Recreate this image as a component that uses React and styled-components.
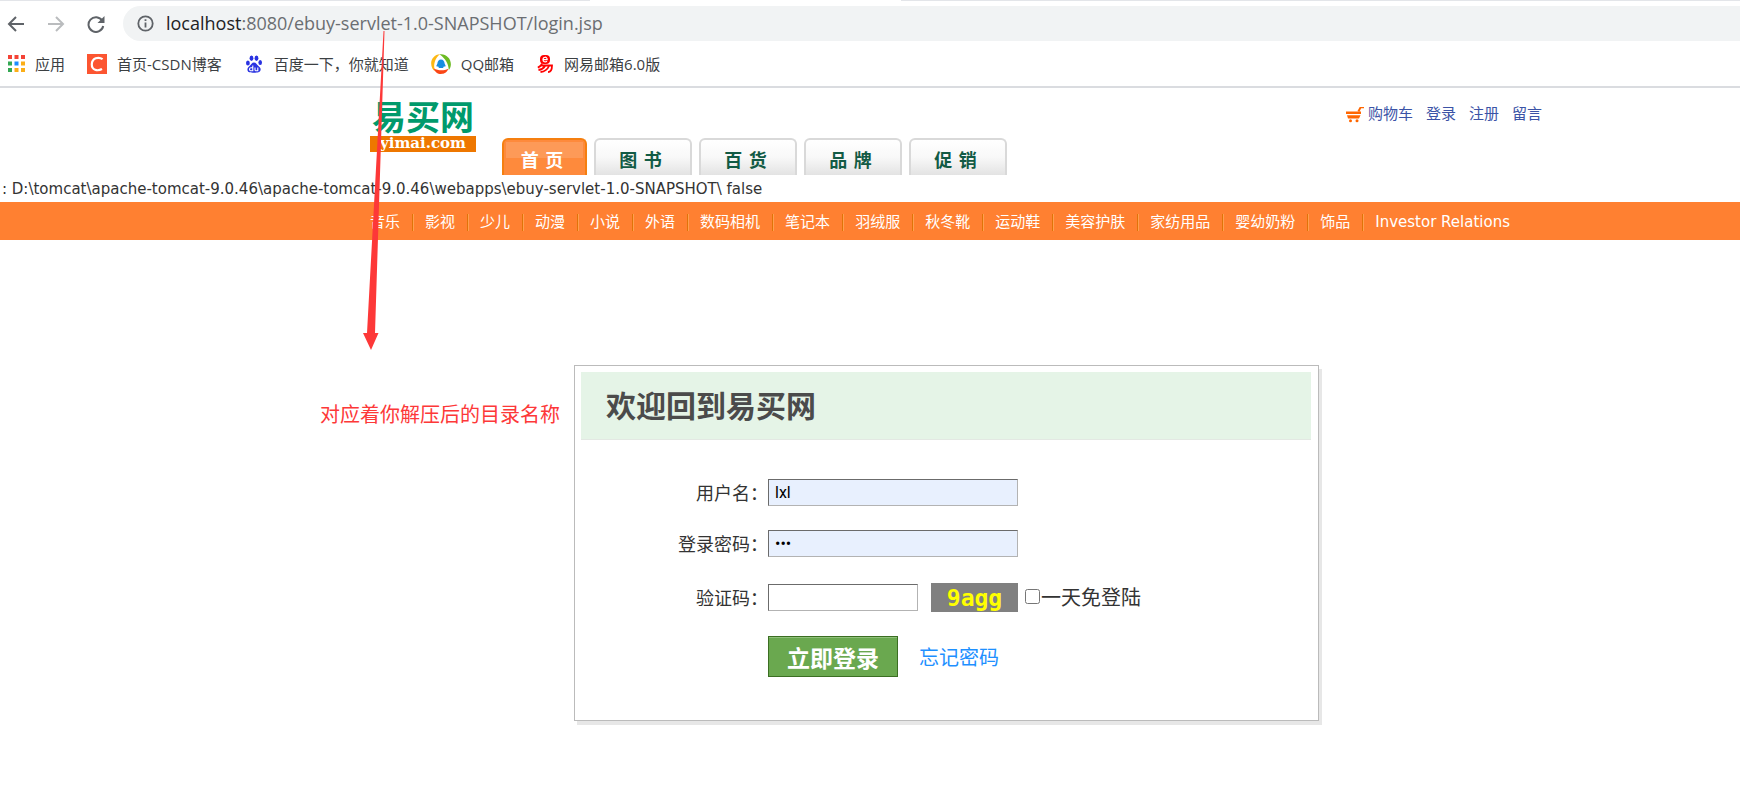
import React, { useState } from "react"
import styled, { createGlobalStyle } from "styled-components"

const TABS = ["首 页", "图 书", "百 货", "品 牌", "促 销"]

const CATEGORIES = [
    "音乐", "影视", "少儿", "动漫", "小说", "外语", "数码相机", "笔记本",
    "羽绒服", "秋冬靴", "运动鞋", "美容护肤", "家纺用品", "婴幼奶粉", "饰品",
    "Investor Relations",
]

const DOTS = [
    ["#f44336", "#f44336", "#f44336"],
    ["#34a853", "#1a8cff", "#fbae17"],
    ["#34a853", "#fbae17", "#fbae17"],
]

function BackIcon({ color }) {
    return (
        <svg width="18" height="18" viewBox="0 0 18 18" fill="none" stroke={color} strokeWidth="2">
            <path d="M17 9H2M9 2L2 9l7 7" />
        </svg>
    )
}

function ForwardIcon({ color }) {
    return (
        <svg width="18" height="18" viewBox="0 0 18 18" fill="none" stroke={color} strokeWidth="2">
            <path d="M1 9h15M9 2l7 7-7 7" />
        </svg>
    )
}

function ReloadIcon() {
    return (
        <svg width="18" height="18" viewBox="0 0 18 18" fill="none">
            <path d="M15.2 5.6A7.4 7.4 0 1 0 16.2 11" stroke="#5f6368" strokeWidth="2" />
            <path d="M17.5 1v7h-7z" fill="#5f6368" />
        </svg>
    )
}

function InfoIcon() {
    return (
        <svg width="17" height="17" viewBox="0 0 17 17">
            <circle cx="8.5" cy="8.5" r="7.2" fill="none" stroke="#5f6368" strokeWidth="1.8" />
            <path d="M7.6 7.6h1.8v5H7.6zM7.6 4.3h1.8v1.8H7.6z" fill="#5f6368" />
        </svg>
    )
}

function AppsIcon() {
    return (
        <svg width="17" height="17" viewBox="0 0 17 17">
            {DOTS.map((row, y) => row.map((fill, x) => (
                <rect key={`${x}${y}`} x={x * 6.5} y={y * 6.5} width="4" height="4" fill={fill} />
            )))}
        </svg>
    )
}

function CsdnIcon() {
    return (
        <svg width="20" height="20" viewBox="0 0 20 20">
            <rect width="20" height="20" fill="#fc5531" />
            <path d="M15.6 5.2C11.5 2.4 5 4 4.8 10.4c-.1 5.8 5.7 7.1 10.2 4.6" fill="none" stroke="#fff" strokeWidth="2.2" />
        </svg>
    )
}

function BaiduIcon() {
    return (
        <svg width="20" height="18" viewBox="-1 0 20 18" fill="#2932e1">
            <ellipse cx="2.9" cy="8" rx="1.9" ry="2.5" />
            <ellipse cx="6.5" cy="3.3" rx="1.9" ry="2.7" />
            <ellipse cx="11.5" cy="3.3" rx="1.9" ry="2.7" />
            <ellipse cx="15.2" cy="7.5" rx="1.8" ry="2.5" />
            <path d="M9 7.500c2.200 0 2.700 2 4.200 3.300 1.800 1.500 2.800 2.500 2.300 4.500-.6 2.300-3 2.400-6.500 2.400s-6.100 0-6.500-2.400c-.4-2 .6-3 2.300-4.500C6.300 9.500 6.800 7.500 9 7.500z" />
            <path d="M7.800 10.500v5.300H6a1.500 1.500 0 0 1 0-3h1.800M10 12.500v2.200c0 .8.300 1.100 1 1.100h1.800v-3.300" fill="none" stroke="#fff" strokeWidth="1.1" />
        </svg>
    )
}

function QqMailIcon() {
    return (
        <svg width="20" height="20" viewBox="0 0 20 20">
            <path d="M9 .3C2 .5-2 8 1.400 14.500c.6 1.200 1.500 2 2.300 2.600C2.500 12 3 5 9 .3z" fill="#fdb813" />
            <path d="M8.500.3C15-.8 21 5 19.700 12c-.3 1.700-1 3-1.900 4C17.500 10.500 15 5 8.500.3z" fill="#6cbb23" />
            <path d="M2.700 14.200c4.300 2.600 9.800 2.800 14.600.6-1 3.500-4.300 5.200-7.300 5.200-3.400 0-6.500-2.300-7.300-5.800z" fill="#fa4616" />
            <path d="M10 5.500c2.200 0 3.500 1.700 3.600 4l1.100 2.400-.8.900-.9-.5-1 1.700H8l-1-1.700-.9.500-.8-.9 1.100-2.400c.1-2.300 1.400-4 3.600-4z" fill="#168de0" />
        </svg>
    )
}

function NeteaseIcon() {
    return (
        <svg width="18" height="18" viewBox="-1 0 18 18" fill="none" stroke="#f00">
            <rect x="3" y="0" width="10" height="9" rx="4" fill="#f00" stroke="none" />
            <path d="M5.800 4.700h4.400c0-3.400-4.200-3.200-4.200 0 0 2.300 2.500 2.600 4 1.500" stroke="#fff" strokeWidth="1.2" />
            <path d="M5 8.500C4 11 2.500 12 .8 12.600M4 10.500h11c0 4-.8 6.600-4 6.600M8 11c-1.500 2.500-3.500 3.600-6.500 4M12 11c-1.500 3.500-4.200 5.600-8.500 6" strokeWidth="1.8" />
        </svg>
    )
}

function CartIcon() {
    return (
        <svg width="18" height="17" viewBox="0 0 18 17" fill="#ff6600">
            <path d="M0 5.500h15v2.500H0zM1 9.200h13.500L13 12.500H2zM11.500 5l2.200-4H18v1.200h-2.800L13.500 5.500z" />
            <circle cx="4.500" cy="14.800" r="1.500" />
            <circle cx="11" cy="14.800" r="1.500" />
        </svg>
    )
}

export default function App() {
    const [user, setUser] = useState("lxl")
    const [password, setPassword] = useState("123")
    const [code, setCode] = useState("")

    return (
        <Page>
            <GlobalStyle />
            <Browser>
                <TabStrip />
                <Toolbar>
                    <NavButtons>
                        <IconButton aria-label="后退"><BackIcon color="#5f6368" /></IconButton>
                        <IconButton aria-label="前进"><ForwardIcon color="#babcbe" /></IconButton>
                        <IconButton aria-label="刷新"><ReloadIcon /></IconButton>
                    </NavButtons>
                    <AddressBar>
                        <InfoIcon />
                        <Url><b>localhost</b>:8080/ebuy-servlet-1.0-SNAPSHOT/login.jsp</Url>
                    </AddressBar>
                </Toolbar>
                <Bookmarks>
                    <Bookmark href="#"><AppsIcon />应用</Bookmark>
                    <Bookmark href="#"><CsdnIcon />首页-CSDN博客</Bookmark>
                    <Bookmark href="#"><BaiduIcon />百度一下，你就知道</Bookmark>
                    <Bookmark href="#"><QqMailIcon />QQ邮箱</Bookmark>
                    <Bookmark href="#"><NeteaseIcon />网易邮箱6.0版</Bookmark>
                </Bookmarks>
            </Browser>

            <Header>
                <Logo>
                    <LogoName>易买网</LogoName>
                    <LogoDomain>yimai.com</LogoDomain>
                </Logo>
                <Tabs>
                    {TABS.map((t, i) => <Tab key={t} href="#" $active={i === 0}>{t}</Tab>)}
                </Tabs>
                <UserLinks>
                    <a href="#"><CartIcon />购物车</a>
                    <a href="#">登录</a>
                    <a href="#">注册</a>
                    <a href="#">留言</a>
                </UserLinks>
            </Header>

            <DebugPath>: D:\tomcat\apache-tomcat-9.0.46\apache-tomcat-9.0.46\webapps\ebuy-servlet-1.0-SNAPSHOT\ false</DebugPath>

            <CategoryBar>
                {CATEGORIES.map((c) => <Category key={c} href="#">{c}</Category>)}
            </CategoryBar>

            <Main>
                <Note>对应着你解压后的目录名称</Note>
                <LoginBox>
                    <Title>欢迎回到易买网</Title>
                    <Form onSubmit={(e) => e.preventDefault()}>
                        <Label htmlFor="user">用户名：</Label>
                        <Field>
                            <Input id="user" $filled value={user} onChange={(e) => setUser(e.target.value)} />
                        </Field>
                        <Label htmlFor="password">登录密码：</Label>
                        <Field>
                            <Input id="password" type="password" $filled value={password} onChange={(e) => setPassword(e.target.value)} />
                        </Field>
                        <Label htmlFor="code">验证码：</Label>
                        <Field>
                            <Input id="code" $short value={code} onChange={(e) => setCode(e.target.value)} />
                            <Captcha>9agg</Captcha>
                            <Remember><input type="checkbox" />一天免登陆</Remember>
                        </Field>
                        <Actions>
                            <Submit type="submit">立即登录</Submit>
                            <Forgot href="#">忘记密码</Forgot>
                        </Actions>
                    </Form>
                </LoginBox>
            </Main>

            <Arrow viewBox="0 0 22 320">
                <path d="M20.500 0L21.500 0L12 302H15.500L8 319L0 302H4z" fill="#fd3838" />
            </Arrow>
        </Page>
    )
}

const GlobalStyle = createGlobalStyle`
* {
    box-sizing: border-box;
}
body {
    margin: 0;
    background: #fff;
    color: #333;
    font-family: "DejaVu Sans", "Noto Sans CJK SC", sans-serif;
    font-size: 15px;
}
a {
    text-decoration: none;
}
svg {
    flex-shrink: 0;
}
`

const Page = styled.div`
position: relative;
overflow: hidden;
`

const Browser = styled.header`
border-bottom: 2px solid #dadce0;
font-family: "Open Sans", "Noto Sans CJK SC", sans-serif;
`

/* the open tab interrupts the line above the toolbar */
const TabStrip = styled.div`
height: 1px;
margin-bottom: 5px;
background: linear-gradient(to right, #e3e5e9 590px, #fff 590px, #fff 901px, #e3e5e9 901px);
`

const Toolbar = styled.div`
display: flex;
align-items: center;
`

const NavButtons = styled.div`
display: flex;
gap: 22px;
width: 123px;
padding-left: 7px;
`

const IconButton = styled.button`
display: flex;
padding: 0;
border: 0;
background: none;
`

const AddressBar = styled.div`
display: flex;
flex: 1;
align-items: center;
gap: 12px;
height: 35px;
padding-left: 14px;
border-radius: 18px 0 0 18px;
background: #f1f3f4;
`

const Url = styled.span`
padding-bottom: 2px;
color: #6b6e72;
font-size: 18px;
b {
    color: #202124;
    font-weight: 400;
}
`

const Bookmarks = styled.nav`
display: flex;
align-items: center;
gap: 22px;
height: 45px;
padding-left: 8px;
`

const Bookmark = styled.a`
display: flex;
align-items: center;
gap: 10px;
color: #3c4043;
font-size: 15px;
`

const Header = styled.div`
display: flex;
align-items: flex-start;
height: 87px;
padding: 12px 198px 0 370px;
`

const Logo = styled.div`
width: 106px;
margin-right: 26px;
`

const LogoName = styled.div`
height: 36px;
color: #009a6c;
font-family: "Noto Sans CJK SC", sans-serif;
font-size: 34px;
font-weight: 700;
line-height: 32px;
text-align: center;
`

const LogoDomain = styled.div`
height: 16px;
background: #ee7700;
color: #fff;
font-family: "DejaVu Serif", serif;
font-size: 15px;
font-weight: 700;
line-height: 15px;
text-align: center;
`

const Tabs = styled.nav`
display: flex;
flex: 1;
align-self: flex-end;
gap: 7px;
`

const Tab = styled.a`
display: flex;
align-items: center;
justify-content: center;
width: ${props => props.$active ? "85px" : "98px"};
height: 37px;
padding: 2px 5px 0 0;
border: 2px solid ${props => props.$active ? "#f57f10" : "#d9d9d9"};
border-bottom: 0;
border-radius: 6px 6px 0 0;
background: ${props => props.$active
        ? "linear-gradient(#fd9a58, #fd9a58) no-repeat center 2px / calc(100% - 4px) 16px, #fe8a3c"
        : "linear-gradient(#fff, #f8f8f8 50%, #e3e3e3)"};
color: ${props => props.$active ? "#fff" : "#125b45"};
font-size: 18px;
font-weight: 700;
`

const UserLinks = styled.nav`
display: flex;
gap: 13px;
padding-top: 4px;
a {
    display: flex;
    align-items: center;
    gap: 4px;
    color: #3b53a6;
    line-height: 20px;
}
`

const DebugPath = styled.div`
height: 27px;
padding-left: 2px;
line-height: 28px;
white-space: nowrap;
`

const CategoryBar = styled.nav`
display: flex;
align-items: center;
height: 38px;
padding: 2px 0 0 358px;
background: #ff8031;
`

const Category = styled.a`
padding: 0 12px;
border-right: 1px solid #e07309;
box-shadow: 1px 0 #ffa04e;
color: #fff;
line-height: 17px;
white-space: nowrap;
&:last-child {
    border-right: 0;
    box-shadow: none;
}
`

const Main = styled.main`
display: flex;
align-items: flex-start;
gap: 14px;
padding: 125px 421px 82px 320px;
`

const Note = styled.p`
flex-shrink: 0;
margin: 35px 0 0;
color: #fd3838;
font-size: 20px;
line-height: 30px;
`

const LoginBox = styled.section`
flex: 1;
padding: 6px 7px 33px 6px;
border: 1px solid #bbb;
background: #fff;
box-shadow: 3px 4px #e7e7e7;
`

const Title = styled.h1`
margin: 0;
padding: 2px 0 0 25px;
border-bottom: 1px solid #e3e8e3;
background: #e5f4e7;
color: #4b4b4b;
font-size: 30px;
line-height: 65px;
`

const Form = styled.form`
display: grid;
grid-template-columns: 187px 1fr;
grid-template-rows: 51px 51px 57px 61px;
align-items: center;
padding-top: 27px;
`

const Label = styled.label`
padding-bottom: 2px;
font-size: 18px;
text-align: right;
`

const Field = styled.div`
display: flex;
align-items: center;
`

const Input = styled.input`
width: ${props => props.$short ? "150px" : "250px"};
height: 27px;
padding: 0 6px;
border: 1px solid;
border-color: #6b6b6b #b3b3b3 #b3b3b3 #6b6b6b;
background: ${props => props.$filled ? "#e8f0fe" : "#fff"};
color: #000;
font-family: Roboto, sans-serif;
font-size: 16px;
`

const Captcha = styled.div`
width: 87px;
height: 29px;
margin-left: 13px;
background: #808080;
color: #ff0;
font-family: "DejaVu Sans Mono", monospace;
font-size: 23px;
font-weight: 700;
line-height: 30px;
text-align: center;
`

const Remember = styled.label`
display: flex;
align-items: center;
padding-bottom: 2px;
font-size: 20px;
input {
    width: 15px;
    height: 15px;
    margin: 0 1px 0 7px;
}
`

const Actions = styled.div`
display: flex;
grid-column: 2;
align-items: center;
gap: 21px;
`

const Submit = styled.button`
width: 130px;
height: 41px;
padding: 0;
border: 1px solid #3b6e22;
background: #6aa84f;
box-shadow: inset 0 1px #8fc07a;
color: #fff;
font-family: inherit;
font-size: 23px;
font-weight: 700;
`

const Forgot = styled.a`
color: #1e90ff;
font-size: 20px;
`

/* points from the project name in the URL down to the note */
const Arrow = styled.svg`
position: absolute;
top: 31px;
left: 363px;
width: 22px;
height: 320px;
pointer-events: none;
`
